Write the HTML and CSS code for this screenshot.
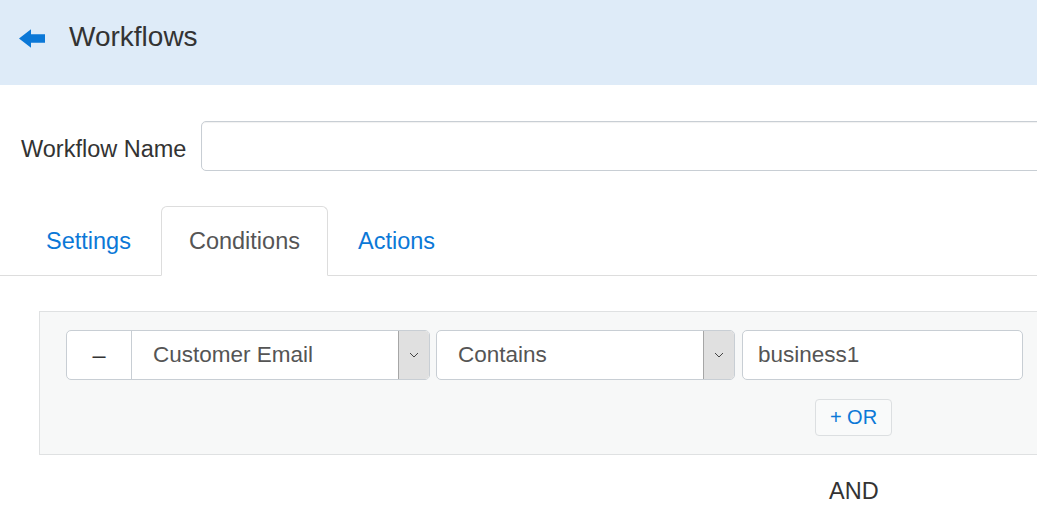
FILE: index.html
```html
<!DOCTYPE html>
<html>
<head>
<meta charset="utf-8">
<title>Workflows</title>
<link rel="stylesheet" href="styles.css">
</head>
<body>
<div class="page">
  <header class="topbar">
    <a class="back" href="#" aria-label="Back">
      <svg width="26" height="19" viewBox="0 0 26 19"><path d="M0 9.5 L12 0.3 V5.2 H26 V13.8 H12 V18.7 Z" fill="#0b78d7"/></svg>
    </a>
    <h1 class="title">Workflows</h1>
  </header>

  <div class="name-row">
    <label class="name-label">Workflow Name</label>
    <div class="name-input"></div>
  </div>

  <ul class="tabs">
    <li class="tab"><a href="#">Settings</a></li>
    <li class="tab active"><a href="#">Conditions</a></li>
    <li class="tab"><a href="#">Actions</a></li>
  </ul>

  <div class="cond-box">
    <div class="cond-row">
      <div class="group">
        <div class="addon">–</div>
        <div class="select first">
          <span class="select-text">Customer Email</span>
          <span class="caret"><svg width="10" height="6" viewBox="0 0 10 6"><path d="M1 1 L5 5 L9 1" fill="none" stroke="#444" stroke-width="1"/></svg></span>
        </div>
      </div>
      <div class="select solo">
        <span class="select-text">Contains</span>
        <span class="caret"><svg width="10" height="6" viewBox="0 0 10 6"><path d="M1 1 L5 5 L9 1" fill="none" stroke="#444" stroke-width="1"/></svg></span>
      </div>
      <div class="value-input">business1</div>
    </div>
    <div class="or-row">
      <button class="or-btn">+ OR</button>
    </div>
  </div>

  <div class="and-row">
    <span class="and">AND</span>
  </div>
</div>
</body>
</html>
```

FILE: styles.css
```css
html, body {
  margin: 0;
  padding: 0;
  overflow: hidden;
  background: #fff;
}
body {
  font-family: "Liberation Sans", Arial, sans-serif;
  color: #333;
  font-size: 23.5px;
}
.page {
  width: 1200px;
}
.topbar {
  height: 85px;
  background: #deebf8;
  display: flex;
  align-items: flex-start;
  box-sizing: border-box;
  padding-left: 19px;
}
.back {
  display: block;
  margin-top: 29px;
  margin-right: 24px;
  line-height: 0;
}
.title {
  margin: 0;
  padding-top: 21px;
  font-size: 28px;
  line-height: 32px;
  font-weight: normal;
  color: #333;
}
.name-row {
  display: flex;
  align-items: center;
  margin-top: 36px;
  padding-left: 21px;
}
.name-label {
  flex: none;
  white-space: nowrap;
  font-size: 23.5px;
  line-height: 32px;
  margin-right: 15px;
  padding-top: 6px;
}
.name-input {
  flex: none;
  width: 1000px;
  height: 50px;
  box-sizing: border-box;
  border: 1px solid #c8ced4;
  border-radius: 5px;
  background: #fff;
  box-shadow: inset 0 1px 1px rgba(0,0,0,0.06);
}
.tabs {
  list-style: none;
  margin: 35px 0 0 0;
  padding: 0 0 0 18px;
  display: flex;
  border-bottom: 1px solid #dddddd;
}
.tab {
  margin-right: 2px;
  margin-bottom: -1px;
}
.tab a {
  display: block;
  padding: 18px 27px;
  line-height: 32px;
  font-size: 23.5px;
  color: #0b78d7;
  text-decoration: none;
  border: 1px solid transparent;
  border-radius: 6px 6px 0 0;
}
.tab.active a {
  color: #555;
  background: #fff;
  border-color: #dddddd;
  border-bottom-color: transparent;
}
.cond-box {
  margin: 35px 0 0 39px;
  width: 1100px;
  box-sizing: border-box;
  border: 1px solid #dfe1e2;
  background: #f7f8f8;
  padding: 18px 26px 18px 26px;
}
.cond-row {
  display: flex;
  align-items: stretch;
  height: 50px;
}
.group {
  display: flex;
  width: 364px;
  height: 50px;
  box-sizing: border-box;
  border: 1px solid #c8ced4;
  border-radius: 5px;
  background: #fff;
  overflow: hidden;
}
.addon {
  width: 64px;
  flex: none;
  border-right: 1px solid #c8ced4;
  display: flex;
  align-items: center;
  justify-content: center;
  color: #333;
  font-size: 23.5px;
}
.select {
  display: flex;
  align-items: center;
  box-sizing: border-box;
  background: #fff;
  color: #555;
  font-size: 22.5px;
}
.select.first {
  flex: 1;
}
.select.solo {
  width: 299px;
  height: 50px;
  margin-left: 6px;
  border: 1px solid #c8ced4;
  border-radius: 5px;
  overflow: hidden;
}
.select-text {
  flex: 1;
  padding-left: 21px;
}
.caret {
  width: 30px;
  align-self: stretch;
  background: #e0e0e0;
  border-left: 1px solid #a6a6a6;
  display: flex;
  align-items: center;
  justify-content: center;
  flex: none;
}
.value-input {
  width: 281px;
  height: 50px;
  margin-left: 7px;
  box-sizing: border-box;
  border: 1px solid #c8ced4;
  border-radius: 5px;
  background: #fff;
  color: #555;
  font-size: 22.5px;
  padding-left: 15px;
  display: flex;
  align-items: center;
}
.or-row {
  display: flex;
  margin-top: 19px;
  padding-left: 749px;
}
.or-btn {
  width: 77px;
  height: 37px;
  box-sizing: border-box;
  border: 1px solid #dcdfe1;
  border-radius: 4px;
  background: #f9fafa;
  color: #0b78d7;
  font-family: "Liberation Sans", Arial, sans-serif;
  font-size: 20px;
  padding: 0;
  line-height: 35px;
}
.and-row {
  display: flex;
  margin-top: 20px;
  padding-left: 829px;
}
.and {
  font-size: 23.5px;
  line-height: 32px;
  color: #333;
}
```
